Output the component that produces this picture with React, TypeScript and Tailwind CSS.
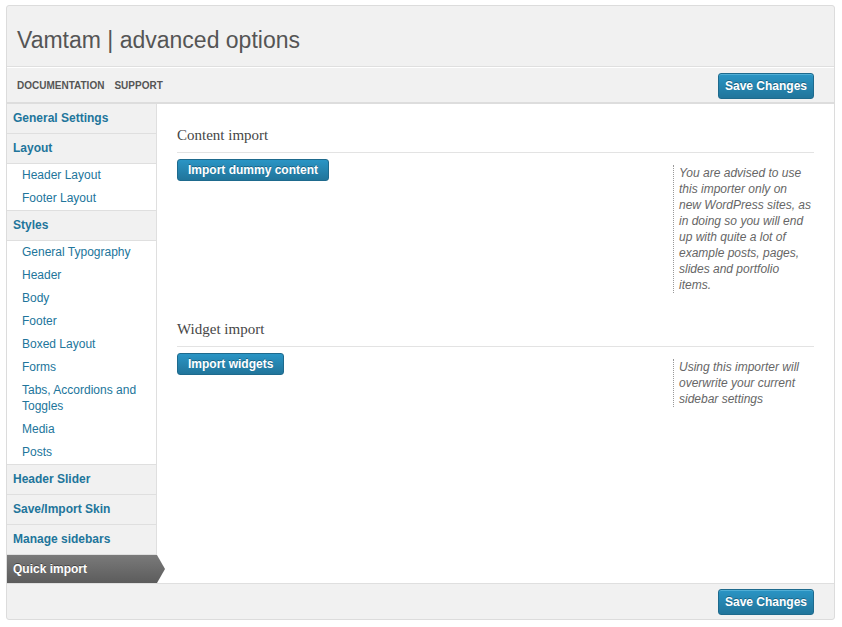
import React from "react";

type NavItem = { label: string; children?: string[]; active?: boolean };

const menu: NavItem[] = [
  { label: "General Settings" },
  { label: "Layout", children: ["Header Layout", "Footer Layout"] },
  {
    label: "Styles",
    children: [
      "General Typography",
      "Header",
      "Body",
      "Footer",
      "Boxed Layout",
      "Forms",
      "Tabs, Accordions and Toggles",
      "Media",
      "Posts",
    ],
  },
  { label: "Header Slider" },
  { label: "Save/Import Skin" },
  { label: "Manage sidebars" },
  { label: "Quick import", active: true },
];

const SaveButton = () => (
  <button className="h-[26px] px-[6px] rounded-[3px] border border-[#1e6a8d] bg-gradient-to-b from-[#2a95c5] to-[#21759b] text-white text-[12px] font-bold [text-shadow:0_-1px_0_rgba(0,0,0,0.3)] shadow-[inset_0_1px_0_rgba(120,200,230,0.5)]">
    Save Changes
  </button>
);

const ActionButton = ({ children }: { children: React.ReactNode }) => (
  <button className="h-[22px] px-[10px] rounded-[3px] border border-[#1e6a8d] bg-gradient-to-b from-[#2a95c5] to-[#21759b] text-white text-[12px] font-bold leading-none [text-shadow:0_-1px_0_rgba(0,0,0,0.3)]">
    {children}
  </button>
);

const Section = ({
  title,
  button,
  lines,
  className,
}: {
  title: string;
  button: string;
  lines: string[];
  className?: string;
}) => (
  <div className={className}>
    <h3 className="pb-[7px] border-b border-[#e3e3e3] text-[15px] leading-[20px] text-[#464646] font-['Liberation_Serif',serif]">
      {title}
    </h3>
    <div className="flex items-start mt-[6px]">
      <ActionButton>{button}</ActionButton>
      <p className="ml-auto mt-[6px] w-[141px] border-l border-dotted border-[#999] pl-[5px] text-[12px] leading-[16px] italic text-[#666] whitespace-nowrap [text-shadow:1px_1px_1px_#fff]">
        {lines.map((l, i) => (
          <React.Fragment key={i}>
            {l}
            {i < lines.length - 1 && <br />}
          </React.Fragment>
        ))}
      </p>
    </div>
  </div>
);

export default function App() {
  return (
    <div className="min-h-screen bg-white pl-[6px] pt-[5px] font-['Liberation_Sans',Arial,sans-serif]">
      <div className="w-[829px] border border-[#dcdcdc] rounded-[3px] bg-[#f1f1f1]">
        {/* Title */}
        <div className="h-[61px] border-b border-[#dfdfdf] flex items-center px-[10px] pt-[8px]">
          <h2 className="text-[23px] text-[#555] leading-[29px]">Vamtam | advanced options</h2>
        </div>

        {/* Top bar */}
        <div className="h-[37px] border-t border-white border-b-2 border-b-[#dddddd] flex items-center pl-[10px] pr-[20px]">
          <a className="text-[10px] font-bold uppercase text-[#555]">Documentation</a>
          <a className="ml-[10px] text-[10px] font-bold uppercase text-[#555]">Support</a>
          <div className="ml-auto mt-[1px]">
            <SaveButton />
          </div>
        </div>

        {/* Body */}
        <div className="flex">
          <div className="w-[150px] shrink-0 border-r border-[#dfdfdf]">
            {menu.map((item) => (
              <div key={item.label}>
                {item.active ? (
                  <div className="relative z-10 w-[158px] h-[28px] flex items-center pl-[6px] text-[12px] font-bold text-white bg-gradient-to-b from-[#7a7a7a] to-[#5c5c5c] [text-shadow:0_-1px_0_rgba(0,0,0,0.4)] [clip-path:polygon(0_0,150px_0,158px_50%,150px_100%,0_100%)]">
                    {item.label}
                  </div>
                ) : (
                  <div className="h-[30px] flex items-center pl-[6px] pb-[2px] border-b border-[#dfdfdf] bg-[#f1f1f1] text-[12px] font-bold text-[#21759b]">
                    {item.label}
                  </div>
                )}
                {item.children && (
                  <div className="bg-white border-b border-[#dfdfdf]">
                    {item.children.map((c) => (
                      <div
                        key={c}
                        className="pl-[15px] pr-[6px] pt-[3px] pb-[4px] text-[12px] leading-[16px] text-[#21759b]"
                      >
                        {c}
                      </div>
                    ))}
                  </div>
                )}
              </div>
            ))}
          </div>

          <div className="flex-1 bg-white pl-[20px] pr-[20px] pt-[21px]">
            <Section
              title="Content import"
              button="Import dummy content"
              lines={[
                "You are advised to use",
                "this importer only on",
                "new WordPress sites, as",
                "in doing so you will end",
                "up with quite a lot of",
                "example posts, pages,",
                "slides and portfolio",
                "items.",
              ]}
            />
            <Section
              className="mt-[26px]"
              title="Widget import"
              button="Import widgets"
              lines={["Using this importer will", "overwrite your current", "sidebar settings"]}
            />
          </div>
        </div>

        {/* Footer */}
        <div className="h-[36px] border-t border-[#dfdfdf] flex items-center justify-end pr-[20px]">
          <SaveButton />
        </div>
      </div>
    </div>
  );
}
